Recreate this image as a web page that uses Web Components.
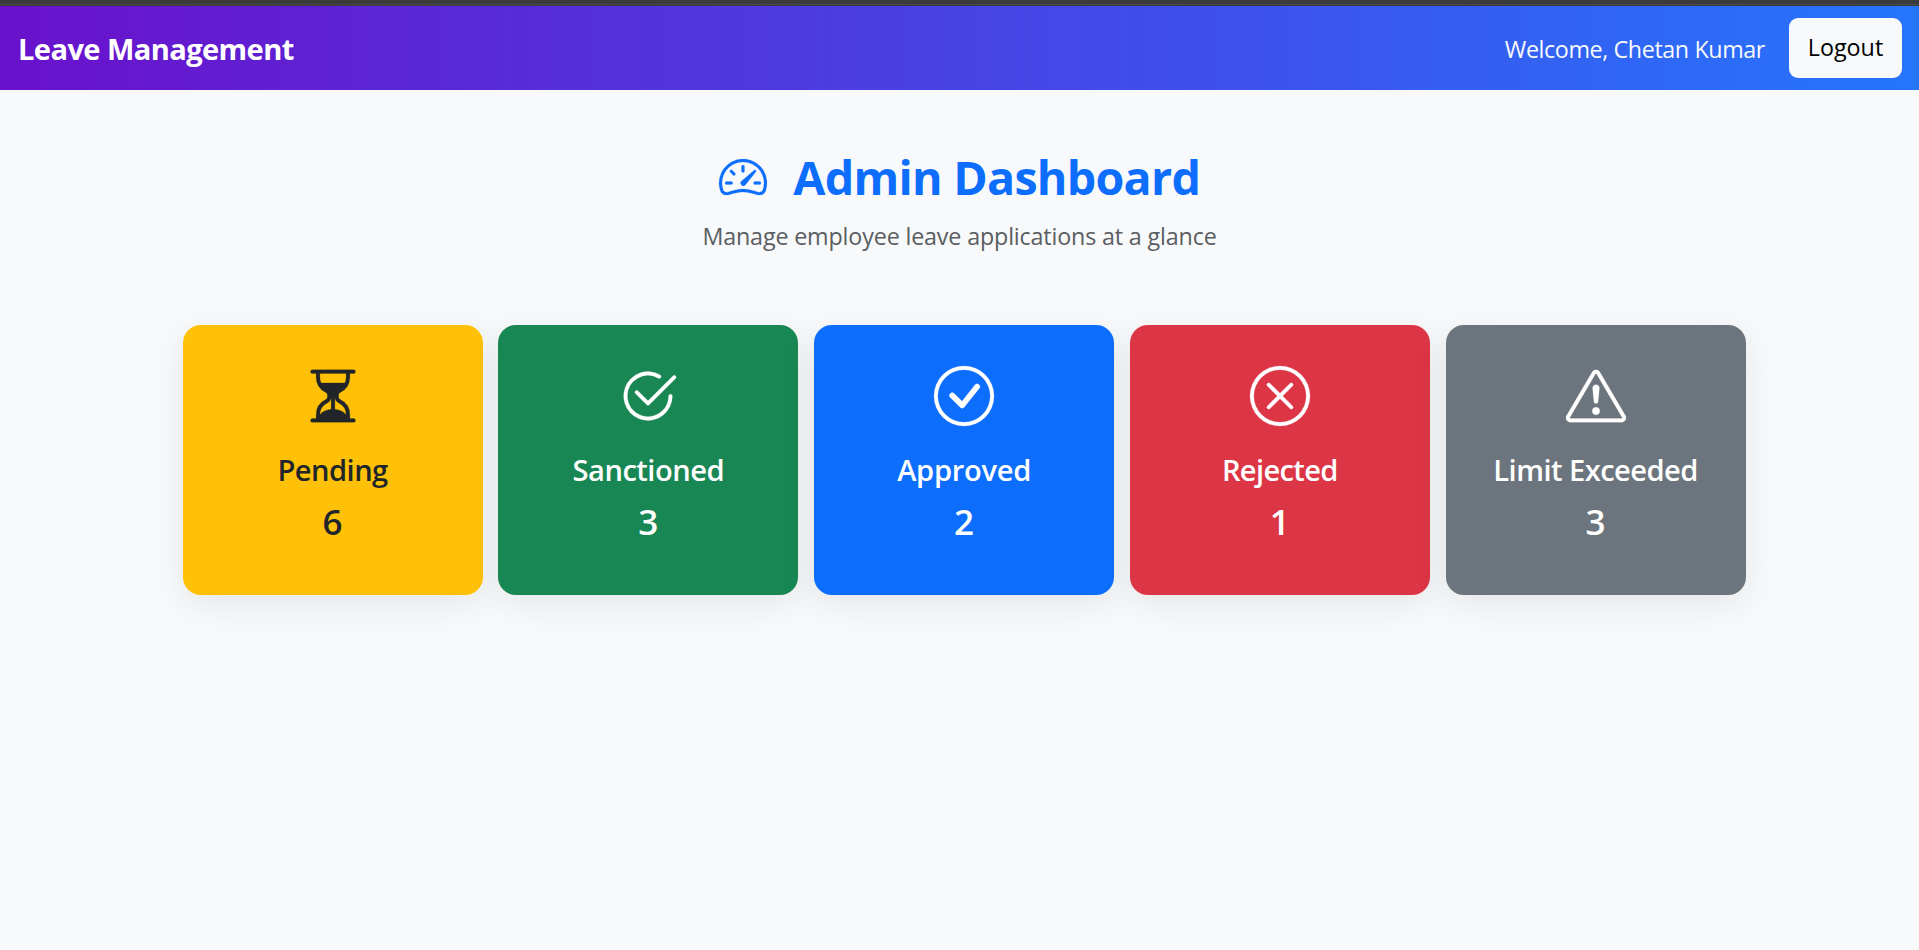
<!DOCTYPE html>
<html lang="en">
<head>
<meta charset="utf-8">
<title>Admin Dashboard</title>
<style>
  html, body { margin: 0; height: 100%; overflow: hidden; }
  body { background: #f8f9fb; color: #212529; font-family: "Open Sans", "Noto Sans", sans-serif; }
</style>
</head>
<body>
<leave-app></leave-app>
<script>
const ICONS = {
  speedometer: '<path d="M8 4a.5.5 0 0 1 .5.5V6a.5.5 0 0 1-1 0V4.5A.5.5 0 0 1 8 4M3.732 5.732a.5.5 0 0 1 .707 0l.915.914a.5.5 0 1 1-.708.708l-.914-.915a.5.5 0 0 1 0-.707M2 10a.5.5 0 0 1 .5-.5h1.586a.5.5 0 0 1 0 1H2.5A.5.5 0 0 1 2 10m9.5 0a.5.5 0 0 1 .5-.5h1.5a.5.5 0 0 1 0 1H12a.5.5 0 0 1-.5-.5m.754-4.246a.39.39 0 0 0-.527-.02L7.547 9.31a.91.91 0 1 0 1.302 1.258l3.434-4.297a.39.39 0 0 0-.029-.518z"/><path fill-rule="evenodd" d="M0 10a8 8 0 1 1 15.547 2.661c-.442 1.253-1.845 1.602-2.932 1.25C11.309 13.488 9.475 13 8 13c-1.474 0-3.31.488-4.615.911-1.087.352-2.49.003-2.932-1.25A8 8 0 0 1 0 10m8-7a7 7 0 0 0-6.603 9.329c.203.575.923.876 1.68.63C4.397 12.533 6.358 12 8 12s3.604.532 4.923.96c.757.245 1.477-.056 1.68-.631A7 7 0 0 0 8 3"/>',
  hourglass: '<path d="M2.5 15a.5.5 0 1 1 0-1h1v-1a4.5 4.5 0 0 1 2.557-4.06c.29-.139.443-.377.443-.59v-.7c0-.213-.154-.451-.443-.59A4.5 4.5 0 0 1 3.5 3V2h-1a.5.5 0 0 1 0-1h11a.5.5 0 0 1 0 1h-1v1a4.5 4.5 0 0 1-2.557 4.06c-.29.139-.443.377-.443.59v.7c0 .213.154.451.443.59A4.5 4.5 0 0 1 12.5 13v1h1a.5.5 0 0 1 0 1zm2-13v1c0 .537.12 1.045.337 1.5h6.326c.216-.455.337-.963.337-1.5V2zm3 6.35c0 .701-.478 1.236-1.011 1.492A3.5 3.5 0 0 0 4.5 13s.866-1.299 3-1.48zm1 0v3.17c2.134.181 3 1.48 3 1.48a3.5 3.5 0 0 0-1.989-3.158C8.978 9.586 8.5 9.052 8.5 8.351z"/>',
  check2: '<path d="M2.5 8a5.5 5.5 0 0 1 8.25-4.764.5.5 0 0 0 .5-.866A6.5 6.5 0 1 0 14.5 8a.5.5 0 0 0-1 0 5.5 5.5 0 1 1-11 0"/><path d="M15.354 3.354a.5.5 0 0 0-.708-.708L8 9.293 5.354 6.646a.5.5 0 1 0-.708.708l3 3a.5.5 0 0 0 .708 0z"/>',
  check: '<path d="M8 15A7 7 0 1 1 8 1a7 7 0 0 1 0 14m0 1A8 8 0 1 0 8 0a8 8 0 0 0 0 16"/><path d="m10.97 4.97-.02.022-3.473 4.425-2.093-2.094a.75.75 0 0 0-1.06 1.06L6.97 11.03a.75.75 0 0 0 1.079-.02l3.992-4.99a.75.75 0 0 0-1.071-1.05"/>',
  cross: '<path d="M8 15A7 7 0 1 1 8 1a7 7 0 0 1 0 14m0 1A8 8 0 1 0 8 0a8 8 0 0 0 0 16"/><path d="M4.646 4.646a.5.5 0 0 1 .708 0L8 7.293l2.646-2.647a.5.5 0 0 1 .708.708L8.707 8l2.647 2.646a.5.5 0 0 1-.708.708L8 8.707l-2.646 2.647a.5.5 0 0 1-.708-.708L7.293 8 4.646 5.354a.5.5 0 0 1 0-.708"/>',
  warning: '<path d="M7.938 2.016A.13.13 0 0 1 8.002 2a.13.13 0 0 1 .063.016.15.15 0 0 1 .054.057l6.857 11.667c.036.06.035.124.002.183a.2.2 0 0 1-.054.06.1.1 0 0 1-.066.017H1.146a.1.1 0 0 1-.066-.017.2.2 0 0 1-.054-.06.18.18 0 0 1 .002-.183L7.884 2.073a.15.15 0 0 1 .054-.057m1.044-.45a1.13 1.13 0 0 0-1.96 0L.165 13.233c-.457.778.091 1.767.98 1.767h13.713c.889 0 1.438-.99.98-1.767z"/><path d="M7.002 12a1 1 0 1 1 2 0 1 1 0 0 1-2 0M7.1 5.995a.905.905 0 1 1 1.8 0l-.35 3.507a.552.552 0 0 1-1.1 0z"/>'
};

class AppIcon extends HTMLElement {
  connectedCallback() {
    if (this.shadowRoot) return;
    this.attachShadow({ mode: 'open' }).innerHTML = `
      <style>
        :host { display: block; width: var(--icon-size, 60px); height: var(--icon-size, 60px); flex: none; }
        svg { display: block; width: 100%; height: 100%; overflow: visible; stroke: currentColor; stroke-width: .06; }
      </style>
      <svg viewBox="0 0 16 16" fill="currentColor" aria-hidden="true">${ICONS[this.getAttribute('name')]}</svg>`;
  }
}

class NavBar extends HTMLElement {
  constructor() {
    super();
    this.attachShadow({ mode: 'open' }).innerHTML = `
      <style>
        :host { display: flex; align-items: center; justify-content: space-between; box-sizing: border-box;
          height: 84px; padding: 0 17px 0 18px; color: #fff;
          background: linear-gradient(90deg, #6a11cb, #2575fc); }
        .brand { margin-top: 2px; font-weight: 700; font-size: 29.1px; line-height: 40px; letter-spacing: -.6px; }
        .user { display: flex; align-items: center; gap: 24px; }
        .welcome { margin-top: 2px; font-size: 23.3px; line-height: 36px; letter-spacing: -.4px; color: #f8f9fa; }
        button { box-sizing: border-box; width: 113px; height: 60px; padding: 11px 0 13px; border: 0; border-radius: 9px;
          background: #f8f9fa; color: #000; font: 400 23.3px/36px "Open Sans", "Noto Sans", sans-serif; }
      </style>
      <div class="brand"><slot name="brand"></slot></div>
      <div class="user"><span class="welcome"><slot></slot></span><button type="button">Logout</button></div>`;
  }
}

class PageHeading extends HTMLElement {
  constructor() {
    super();
    this.attachShadow({ mode: 'open' }).innerHTML = `
      <style>
        :host { display: flex; flex-direction: column; align-items: center; gap: 12px; }
        h1 { --icon-size: 48px; display: flex; align-items: center; gap: 26.5px; margin: 0; color: #0d6efd;
          font-weight: 700; font-size: 46.6px; line-height: 58px; letter-spacing: -.74px; white-space: nowrap; }
        p { margin: 0; color: #5a5e62; font-size: 23.3px; line-height: 36px; letter-spacing: -.16px; }
      </style>
      <h1><app-icon name="speedometer"></app-icon><span><slot></slot></span></h1>
      <p><slot name="subtitle"></slot></p>`;
  }
}

class StatCard extends HTMLElement {
  constructor() {
    super();
    this.attachShadow({ mode: 'open' }).innerHTML = `
      <style>
        :host { display: flex; flex-direction: column; align-items: center; box-sizing: border-box; height: 270px;
          padding-top: 41px; border-radius: 18px; color: #fff; box-shadow: 0 9px 36px rgba(0, 0, 0, .08); }
        :host([tone="warning"]) { background: #ffc107; color: #212529; }
        :host([tone="success"]) { background: #198754; }
        :host([tone="primary"]) { background: #0d6efd; }
        :host([tone="danger"]) { background: #dc3545; }
        :host([tone="secondary"]) { background: #6c757d; }
        .label { margin-top: 26px; font-weight: 600; font-size: 29.1px; line-height: 36px; letter-spacing: var(--track, -.5px); }
        .count { margin-top: 12px; font-weight: 600; font-size: 35px; line-height: 43px; }
      </style>
      <slot name="icon"></slot>
      <div class="label"><slot></slot></div>
      <div class="count"><slot name="count"></slot></div>`;
  }
}

class LeaveApp extends HTMLElement {
  constructor() {
    super();
    const cards = [
      ['warning', 'hourglass', 'Pending', 6, -.55],
      ['success', 'check2', 'Sanctioned', 3, -.49],
      ['primary', 'check', 'Approved', 2, -.3],
      ['danger', 'cross', 'Rejected', 1, -.64],
      ['secondary', 'warning', 'Limit Exceeded', 3, -.54]
    ].map(([tone, icon, label, count, track]) =>
      `<stat-card tone="${tone}" style="--track:${track}px"><app-icon slot="icon" name="${icon}"></app-icon>${label}<span slot="count">${count}</span></stat-card>`
    ).join('');
    this.attachShadow({ mode: 'open' }).innerHTML = `
      <style>
        :host { display: block; }
        .edge { height: 6px; background: linear-gradient(#3b3b3b 4px, #494949 4px 5px, #3b3b3b 5px); }
        main { padding-top: 58px; }
        .cards { display: grid; grid-template-columns: repeat(5, 300px); column-gap: 15.75px; margin: 71px 0 0 182.6px; }
      </style>
      <div class="edge"></div>
      <nav-bar><span slot="brand">Leave Management</span>Welcome, Chetan Kumar</nav-bar>
      <main>
        <page-heading>Admin Dashboard<span slot="subtitle">Manage employee leave applications at a glance</span></page-heading>
        <section class="cards">${cards}</section>
      </main>`;
  }
}

customElements.define('app-icon', AppIcon);
customElements.define('nav-bar', NavBar);
customElements.define('page-heading', PageHeading);
customElements.define('stat-card', StatCard);
customElements.define('leave-app', LeaveApp);
</script>
</body>
</html>
